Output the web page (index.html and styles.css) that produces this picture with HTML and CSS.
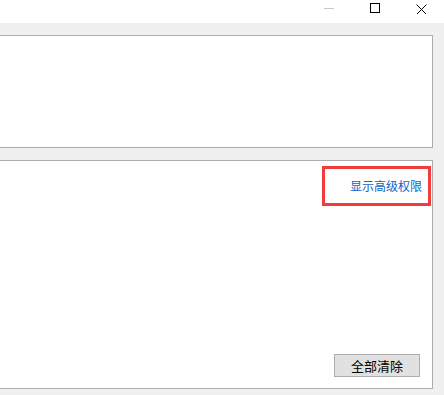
FILE: index.html
```html
<!DOCTYPE html>
<html>
<head>
    <meta charset="UTF-8">
    <title>权限设置</title>
    <link rel="stylesheet" href="styles.css">
</head>
<body>
    <div id="titlebar">
        <div class="caption-button disabled">
            <svg width="10" height="10" viewBox="0 0 10 10"><path d="M0 5.5H10" stroke="#c8c8c8" stroke-width="1"/></svg>
        </div>
        <div class="caption-button">
            <svg width="10" height="10" viewBox="0 0 10 10"><rect x="0.5" y="0.5" width="9" height="9" fill="none" stroke="#000" stroke-width="1"/></svg>
        </div>
        <div class="caption-button">
            <svg width="11" height="11" viewBox="0 0 11 11"><path d="M0.5 1.5L10.5 11.5M10.5 1.5L0.5 11.5" stroke="#000" stroke-width="1"/></svg>
        </div>
    </div>
    <div id="content">
        <div class="panel" id="top-panel"></div>
        <div class="panel" id="bottom-panel">
            <div id="advanced-box">
                <a id="advanced-link" href="#">显示高级权限</a>
            </div>
            <button id="clear-button">全部清除</button>
        </div>
    </div>
</body>
</html>
```

FILE: styles.css
```css
body {
    margin: 0;
    padding: 0;
    font-family: "Noto Sans CJK SC", "Noto Sans", sans-serif;
    background-color: #f0f0f0;
    overflow: hidden;
    height: 395px;
}
#titlebar {
    height: 23px;
    background-color: white;
    display: flex;
    justify-content: flex-end;
}
.caption-button {
    width: 46px;
    height: 20px;
    display: flex;
    align-items: flex-start;
    justify-content: center;
    padding-top: 3px;
}
.caption-button svg {
    display: block;
}
#content {
    display: flex;
    flex-direction: column;
    margin-left: -10px;
    margin-right: 11px;
}
.panel {
    background-color: white;
    border: 1px solid #adadad;
    margin-top: 12px;
    box-sizing: border-box;
}
#top-panel {
    height: 113px;
}
#bottom-panel {
    height: 229px;
    display: flex;
    flex-direction: column;
}
#advanced-box {
    align-self: flex-end;
    margin-top: 5px;
    margin-right: 1px;
    width: 109px;
    height: 40px;
    box-sizing: border-box;
    border: 3px solid #f23b3b;
    display: flex;
    align-items: center;
    justify-content: flex-end;
    padding-right: 6px;
    padding-bottom: 1px;
}
#advanced-link {
    color: #0a66c8;
    text-decoration: none;
    font-size: 12px;
    line-height: 16px;
}
#clear-button {
    align-self: flex-end;
    margin-top: auto;
    margin-right: 12px;
    margin-bottom: 11px;
    width: 86px;
    height: 23px;
    background-color: #e1e1e1;
    border: 1px solid #adadad;
    font-family: "Noto Sans CJK SC", "Noto Sans", sans-serif;
    font-size: 13px;
    color: black;
    padding: 0;
    line-height: 20px;
}
```
